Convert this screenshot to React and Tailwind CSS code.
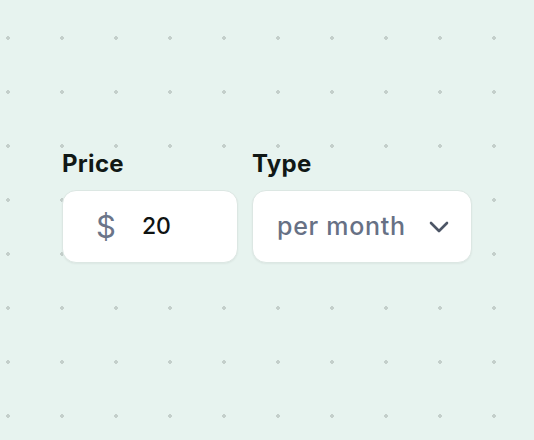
import React from 'react';

export default function App() {
    return (
        <div
            className="min-h-screen w-full bg-[#e7f3ef] bg-[radial-gradient(circle,#c4cfcb_1.7px,transparent_2.1px)] bg-[size:54px_54px] bg-[position:-19px_11px] pl-[62px] pt-[149px]"
            style={{ fontFamily: 'Inter, "Noto Sans", sans-serif' }}
        >
            <div className="flex gap-[14px]">
                {/* price */}
                <div className="flex flex-col w-[176px]">
                    <label className="text-[24px] leading-[30px] font-bold text-[#111816] mb-[11px] tracking-[0.3px]">Price</label>
                    <div className="h-[73px] rounded-[14px] bg-white border border-[#dce7e3] shadow-[0_1px_2px_rgba(0,0,0,0.05)] flex items-center pl-[33px]">
                        <span className="text-[31px] leading-none text-[#6b7589] font-normal">$</span>
                        <span className="ml-[26px] text-[23px] leading-none text-[#0f1312] font-medium">20</span>
                    </div>
                </div>

                {/* type */}
                <div className="flex flex-col w-[220px]">
                    <label className="text-[24px] leading-[30px] font-bold text-[#111816] mb-[11px] tracking-[0.3px]">Type</label>
                    <div className="h-[73px] rounded-[14px] bg-white border border-[#dce7e3] shadow-[0_1px_2px_rgba(0,0,0,0.05)] flex items-center justify-between pl-[24px] pr-[21px]">
                        <span className="text-[25px] leading-none text-[#677185] font-medium tracking-[0.7px]">per month</span>
                        <svg width="22" height="14" viewBox="0 0 22 14" fill="none" stroke="#4d5666" strokeWidth="2.6" strokeLinecap="round" strokeLinejoin="round">
                            <path d="M3 3l8 8 8-8" />
                        </svg>
                    </div>
                </div>
            </div>
        </div>
    );
}
